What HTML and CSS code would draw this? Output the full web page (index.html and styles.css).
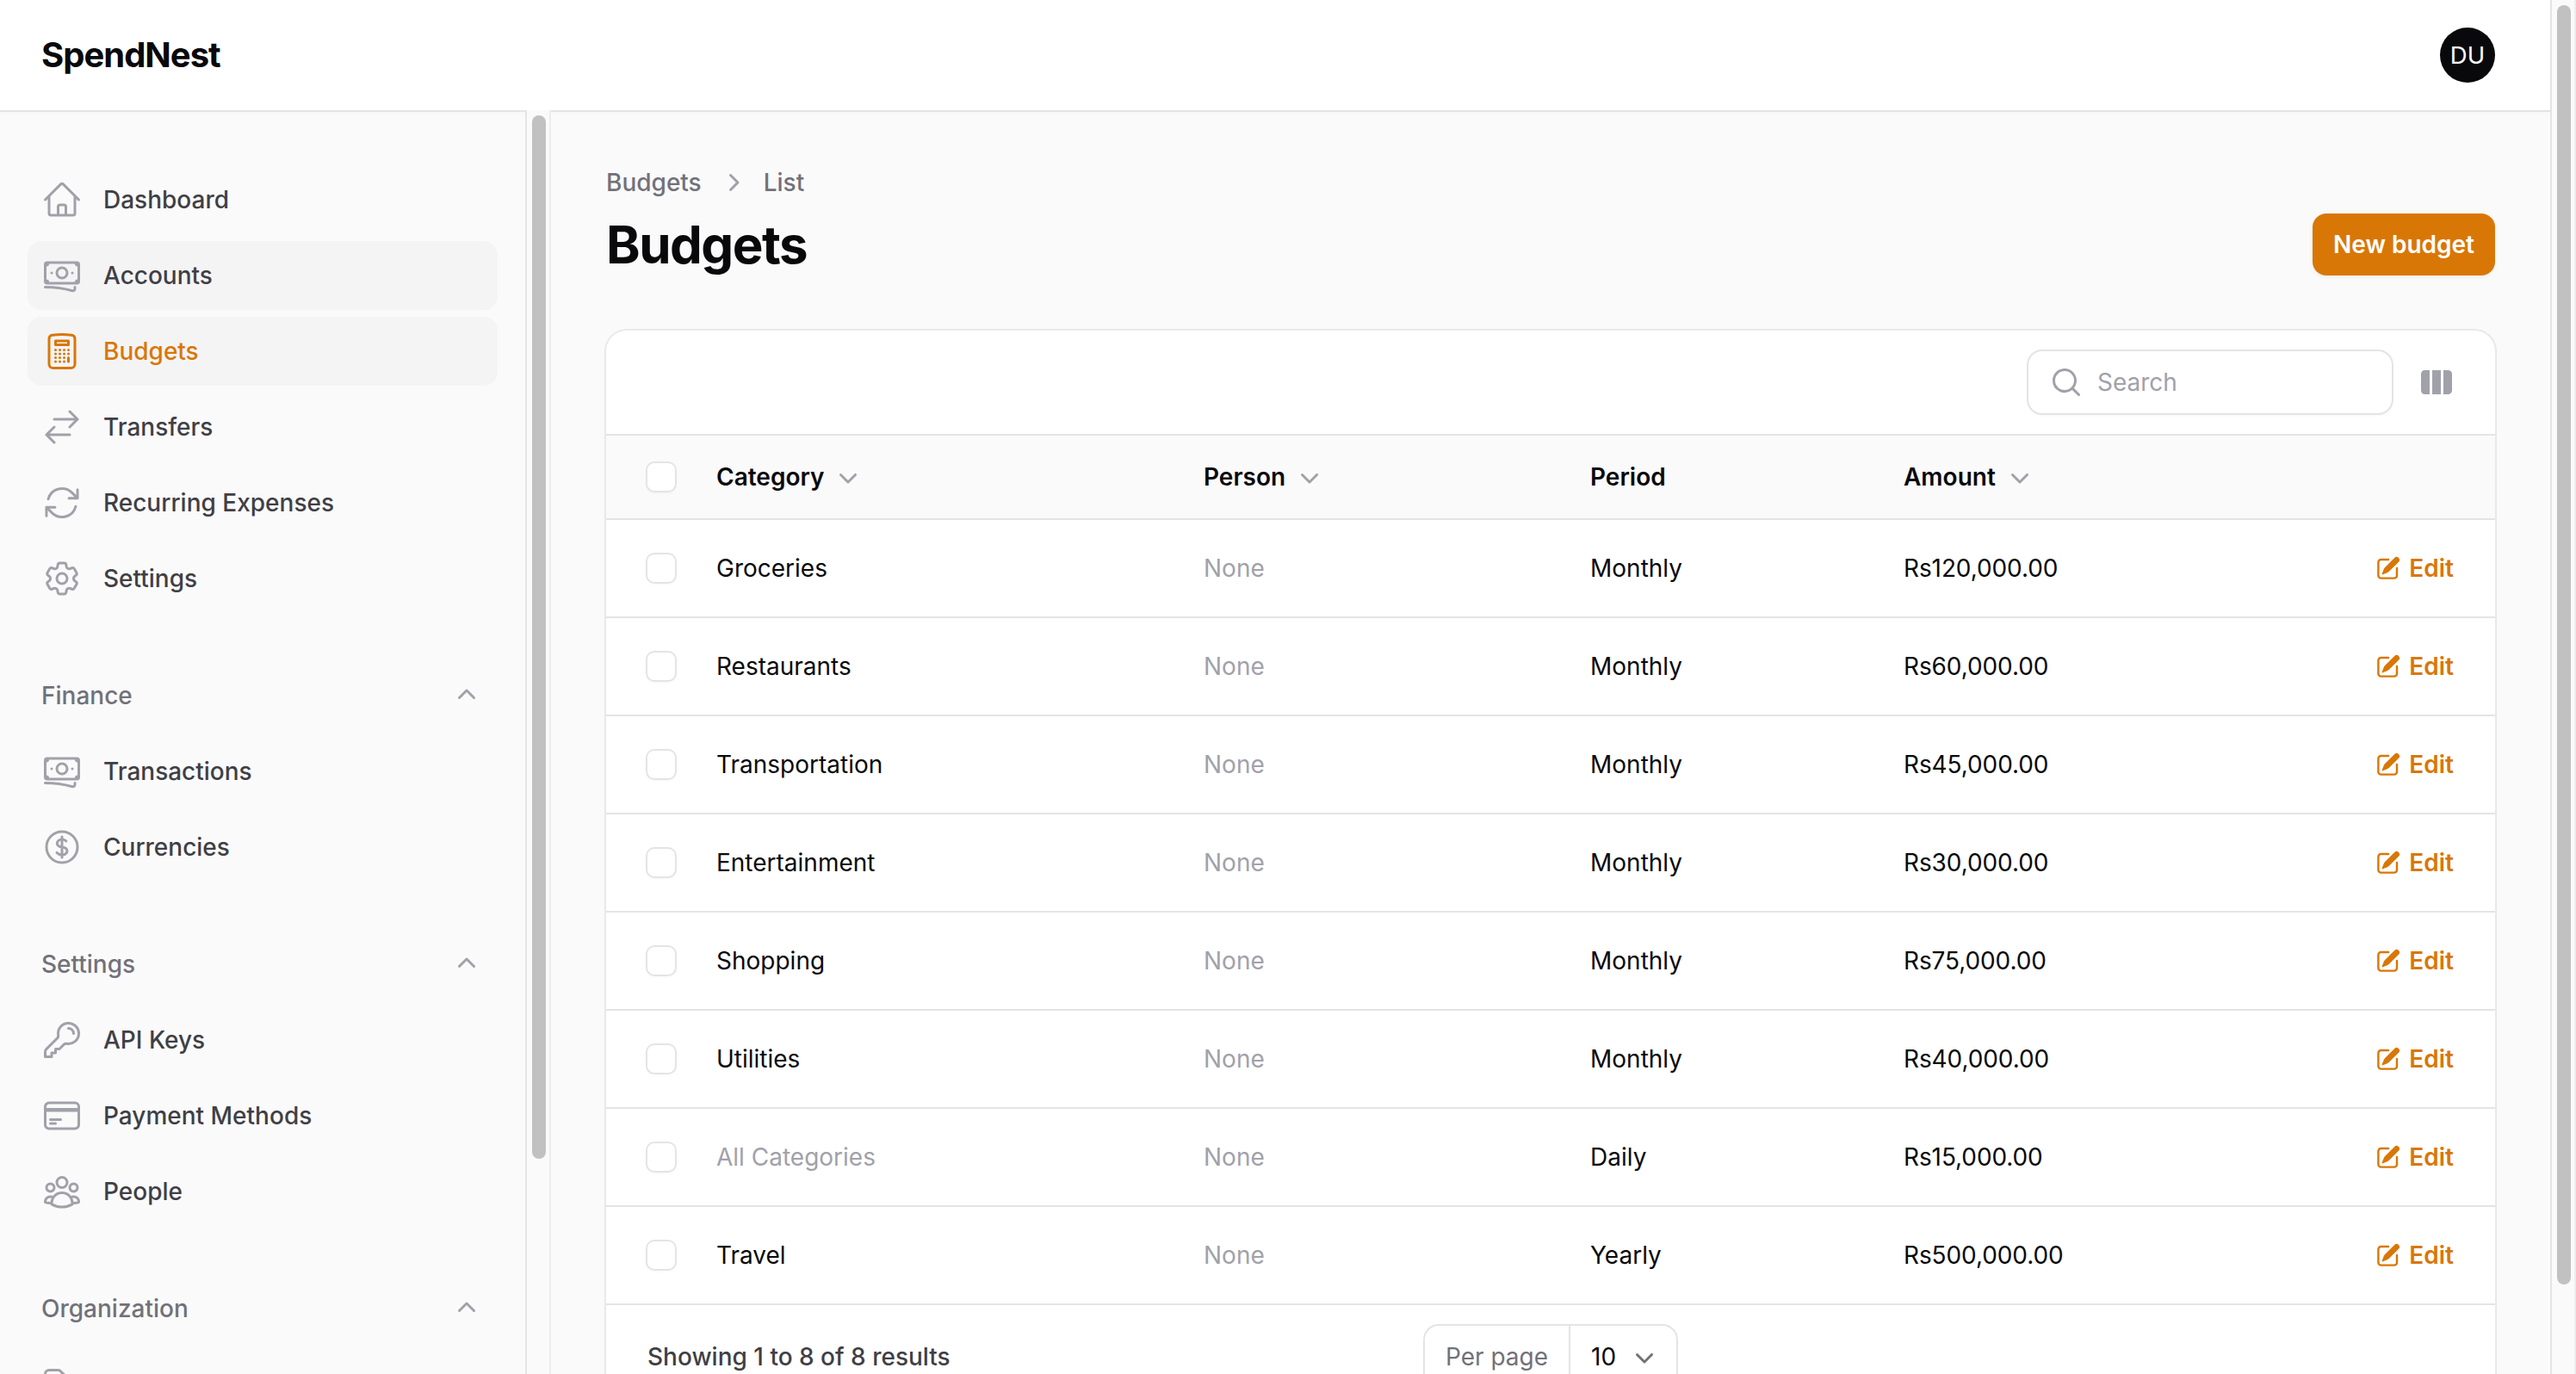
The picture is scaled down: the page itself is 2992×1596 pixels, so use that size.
FILE: index.html
```html
<!DOCTYPE html>
<html lang="en">
<head>
<meta charset="utf-8">
<title>Budgets - SpendNest</title>
<link rel="stylesheet" href="styles.css">
</head>
<body>
<svg class="sprite" xmlns="http://www.w3.org/2000/svg">
  <symbol id="home" viewBox="0 0 24 24"><path d="m2.25 12 8.954-8.955c.44-.439 1.152-.439 1.591 0L21.75 12M4.5 9.75v10.125c0 .621.504 1.125 1.125 1.125H9.75v-4.875c0-.621.504-1.125 1.125-1.125h2.25c.621 0 1.125.504 1.125 1.125V21h4.125c.621 0 1.125-.504 1.125-1.125V9.75M8.25 21h8.25"/></symbol>
  <symbol id="banknotes" viewBox="0 0 24 24"><path d="M2.25 18.75a60.07 60.07 0 0 1 15.797 2.101c.727.198 1.453-.342 1.453-1.096V18.75M3.75 4.5v.75A.75.75 0 0 1 3 6h-.75m0 0v-.375c0-.621.504-1.125 1.125-1.125H20.25M2.25 6v9m18-10.5v.75c0 .414.336.75.75.75h.75m-1.5-1.5h.375c.621 0 1.125.504 1.125 1.125v9.75c0 .621-.504 1.125-1.125 1.125h-.375m1.5-1.5H21a.75.75 0 0 0-.75.75v.75m0 0H3.75m0 0h-.375a1.125 1.125 0 0 1-1.125-1.125V15m1.5 1.5v-.75A.75.75 0 0 0 3 15h-.75M15 10.5a3 3 0 1 1-6 0 3 3 0 0 1 6 0Zm3 0h.008v.008H18V10.5Zm-12 0h.008v.008H6V10.5Z"/></symbol>
  <symbol id="calculator" viewBox="0 0 24 24"><path d="M15.75 15.75V18m-7.5-6.75h.008v.008H8.25v-.008Zm0 2.25h.008v.008H8.25V13.5Zm0 2.25h.008v.008H8.25v-.008Zm0 2.25h.008v.008H8.25V18Zm2.498-6.75h.007v.008h-.007v-.008Zm0 2.25h.007v.008h-.007V13.5Zm0 2.25h.007v.008h-.007v-.008Zm0 2.25h.007v.008h-.007V18Zm2.504-6.75h.008v.008h-.008v-.008Zm0 2.25h.008v.008h-.008V13.5Zm0 2.25h.008v.008h-.008v-.008Zm0 2.25h.008v.008h-.008V18Zm2.498-6.75h.008v.008h-.008v-.008Zm0 2.25h.008v.008h-.008V13.5ZM8.25 6h7.5v2.25h-7.5V6ZM12 2.25c-1.892 0-3.758.11-5.593.322C5.307 2.7 4.5 3.65 4.5 4.757V19.5a2.25 2.25 0 0 0 2.25 2.25h10.5a2.25 2.25 0 0 0 2.25-2.25V4.757c0-1.108-.806-2.057-1.907-2.185A48.507 48.507 0 0 0 12 2.25Z"/></symbol>
  <symbol id="transfer" viewBox="0 0 24 24"><path d="M7.5 21 3 16.5m0 0L7.5 12M3 16.5h13.5m0-13.5L21 7.5m0 0L16.5 12M21 7.5H7.5"/></symbol>
  <symbol id="refresh" viewBox="0 0 24 24"><path d="M16.023 9.348h4.992v-.001M2.985 19.644v-4.992m0 0h4.992m-4.993 0 3.181 3.183a8.25 8.25 0 0 0 13.803-3.7M4.031 9.865a8.25 8.25 0 0 1 13.803-3.7l3.181 3.182m0-4.991v4.99"/></symbol>
  <symbol id="cog" viewBox="0 0 24 24"><path d="M9.594 3.94c.09-.542.56-.94 1.11-.94h2.593c.55 0 1.02.398 1.11.94l.213 1.281c.063.374.313.686.645.87.074.04.147.083.22.127.325.196.72.257 1.075.124l1.217-.456a1.125 1.125 0 0 1 1.37.49l1.296 2.247a1.125 1.125 0 0 1-.26 1.431l-1.003.827c-.293.241-.438.613-.43.992a7.723 7.723 0 0 1 0 .255c-.008.378.137.75.43.991l1.004.827c.424.35.534.955.26 1.43l-1.298 2.247a1.125 1.125 0 0 1-1.369.491l-1.217-.456c-.355-.133-.75-.072-1.076.124a6.47 6.47 0 0 1-.22.128c-.331.183-.581.495-.644.869l-.213 1.281c-.09.543-.56.94-1.11.94h-2.594c-.55 0-1.019-.398-1.11-.94l-.213-1.281c-.062-.374-.312-.686-.644-.87a6.52 6.52 0 0 1-.22-.127c-.325-.196-.72-.257-1.076-.124l-1.217.456a1.125 1.125 0 0 1-1.369-.49l-1.297-2.247a1.125 1.125 0 0 1 .26-1.431l1.004-.827c.292-.24.437-.613.43-.991a6.932 6.932 0 0 1 0-.255c.007-.38-.138-.751-.43-.992l-1.004-.827a1.125 1.125 0 0 1-.26-1.43l1.297-2.247a1.125 1.125 0 0 1 1.37-.491l1.216.456c.356.133.751.072 1.076-.124.072-.044.146-.086.22-.128.332-.183.582-.495.644-.869l.214-1.28Z"/><path d="M15 12a3 3 0 1 1-6 0 3 3 0 0 1 6 0Z"/></symbol>
  <symbol id="dollar" viewBox="0 0 24 24"><path d="M12 6v12m-3-2.818.879.659c1.171.879 3.07.879 4.242 0 1.172-.879 1.172-2.303 0-3.182C13.536 12.219 12.768 12 12 12c-.725 0-1.45-.22-2.003-.659-1.106-.879-1.106-2.303 0-3.182s2.9-.879 4.006 0l.415.33M21 12a9 9 0 1 1-18 0 9 9 0 0 1 18 0Z"/></symbol>
  <symbol id="key" viewBox="0 0 24 24"><path d="M15.75 5.25a3 3 0 0 1 3 3m3 0a6 6 0 0 1-7.029 5.912c-.563-.097-1.159.026-1.563.43L10.5 17.25H8.25v2.25H6v2.25H2.25v-2.818c0-.597.237-1.17.659-1.591l6.499-6.499c.404-.404.527-1 .43-1.563A6 6 0 1 1 21.75 8.25Z"/></symbol>
  <symbol id="card" viewBox="0 0 24 24"><path d="M2.25 8.25h19.5M2.25 9h19.5m-16.5 5.25h6m-6 2.25h3m-3.75 3h15a2.25 2.25 0 0 0 2.25-2.25V6.75A2.25 2.25 0 0 0 19.5 4.5h-15a2.25 2.25 0 0 0-2.25 2.25v10.5A2.25 2.25 0 0 0 4.5 19.5Z"/></symbol>
  <symbol id="people" viewBox="0 0 24 24"><path d="M18 18.72a9.094 9.094 0 0 0 3.741-.479 3 3 0 0 0-4.682-2.72m.94 3.198.001.031c0 .225-.012.447-.037.666A11.944 11.944 0 0 1 12 21c-2.17 0-4.207-.576-5.963-1.584A6.062 6.062 0 0 1 6 18.719m12 0a5.971 5.971 0 0 0-.941-3.197m0 0A5.995 5.995 0 0 0 12 12.75a5.995 5.995 0 0 0-5.058 2.772m0 0a3 3 0 0 0-4.681 2.72 8.986 8.986 0 0 0 3.74.477m.94-3.197a5.971 5.971 0 0 0-.94 3.197M15 6.75a3 3 0 1 1-6 0 3 3 0 0 1 6 0Zm6 3a2.25 2.25 0 1 1-4.5 0 2.25 2.25 0 0 1 4.5 0Zm-13.5 0a2.25 2.25 0 1 1-4.5 0 2.25 2.25 0 0 1 4.5 0Z"/></symbol>
  <symbol id="folder" viewBox="0 0 24 24"><path d="M2.25 12.75V12A2.25 2.25 0 0 1 4.5 9.75h15A2.25 2.25 0 0 1 21.75 12v.75m-8.69-6.44-2.12-2.12a1.5 1.5 0 0 0-1.061-.44H4.5A2.25 2.25 0 0 0 2.25 6v12a2.25 2.25 0 0 0 2.25 2.25h15A2.25 2.25 0 0 0 21.75 18V9a2.25 2.25 0 0 0-2.25-2.25h-5.379a1.5 1.5 0 0 1-1.06-.44Z"/></symbol>
  <symbol id="up" viewBox="0 0 20 20"><path d="M9.47 6.47a.75.75 0 0 1 1.06 0l4.25 4.25a.75.75 0 1 1-1.06 1.06L10 8.06l-3.72 3.72a.75.75 0 0 1-1.06-1.06l4.25-4.25Z"/></symbol>
  <symbol id="down" viewBox="0 0 20 20"><path d="M5.22 8.22a.75.75 0 0 1 1.06 0L10 11.94l3.72-3.72a.75.75 0 1 1 1.06 1.06l-4.25 4.25a.75.75 0 0 1-1.06 0L5.22 9.28a.75.75 0 0 1 0-1.06Z"/></symbol>
  <symbol id="right" viewBox="0 0 20 20"><path d="M8.22 5.22a.75.75 0 0 1 1.06 0l4.25 4.25a.75.75 0 0 1 0 1.06l-4.25 4.25a.75.75 0 0 1-1.06-1.06L11.94 10 8.22 6.28a.75.75 0 0 1 0-1.06Z"/></symbol>
  <symbol id="search" viewBox="0 0 20 20"><path fill-rule="evenodd" d="M9 3.5a5.5 5.5 0 1 0 0 11 5.5 5.5 0 0 0 0-11ZM2 9a7 7 0 1 1 12.452 4.391l3.328 3.329a.75.75 0 1 1-1.06 1.06l-3.329-3.328A7 7 0 0 1 2 9Z"/></symbol>
  <symbol id="columns" viewBox="0 0 20 20"><path d="M14 17h2.75A2.25 2.25 0 0 0 19 14.75v-9.5A2.25 2.25 0 0 0 16.75 3H14v14ZM12.5 3h-5v14h5V3ZM3.25 3H6v14H3.25A2.25 2.25 0 0 1 1 14.75v-9.5A2.25 2.25 0 0 1 3.25 3Z"/></symbol>
  <symbol id="edit" viewBox="0 0 20 20"><path d="m5.433 13.917 1.262-3.155A4 4 0 0 1 7.58 9.42l6.92-6.918a2.121 2.121 0 0 1 3 3l-6.92 6.918c-.383.383-.84.685-1.343.886l-3.154 1.262a.5.5 0 0 1-.65-.65Z"/><path d="M3.5 5.75c0-.69.56-1.25 1.25-1.25H10A.75.75 0 0 0 10 3H4.75A2.75 2.75 0 0 0 2 5.75v9.5A2.75 2.75 0 0 0 4.75 18h9.5A2.75 2.75 0 0 0 17 15.25V10a.75.75 0 0 0-1.5 0v5.25c0 .69-.56 1.25-1.25 1.25h-9.5c-.69 0-1.25-.56-1.25-1.25v-9.5Z"/></symbol>
</svg>

<div class="window">
  <div class="page">
    <header class="topbar">
      <div class="logo">SpendNest</div>
      <div class="avatar">DU</div>
    </header>
    <div class="body">
      <aside class="sidebar">
        <nav class="nav">
          <ul class="group">
            <li class="item"><svg class="icon"><use href="#home"/></svg>Dashboard</li>
            <li class="item hovered"><svg class="icon"><use href="#banknotes"/></svg>Accounts</li>
            <li class="item active"><svg class="icon"><use href="#calculator"/></svg>Budgets</li>
            <li class="item"><svg class="icon"><use href="#transfer"/></svg>Transfers</li>
            <li class="item"><svg class="icon"><use href="#refresh"/></svg>Recurring Expenses</li>
            <li class="item"><svg class="icon"><use href="#cog"/></svg>Settings</li>
          </ul>
          <ul class="group">
            <li class="label">Finance<svg class="mini"><use href="#up"/></svg></li>
            <li class="item"><svg class="icon"><use href="#banknotes"/></svg>Transactions</li>
            <li class="item"><svg class="icon"><use href="#dollar"/></svg>Currencies</li>
          </ul>
          <ul class="group">
            <li class="label">Settings<svg class="mini"><use href="#up"/></svg></li>
            <li class="item"><svg class="icon"><use href="#key"/></svg>API Keys</li>
            <li class="item"><svg class="icon"><use href="#card"/></svg>Payment Methods</li>
            <li class="item"><svg class="icon"><use href="#people"/></svg>People</li>
          </ul>
          <ul class="group">
            <li class="label">Organization<svg class="mini"><use href="#up"/></svg></li>
            <li class="item"><svg class="icon"><use href="#folder"/></svg></li>
          </ul>
        </nav>
        <div class="scrollbar side-scroll"><div class="thumb"></div></div>
      </aside>

      <main class="main">
        <div class="crumbs"><span>Budgets</span><svg class="mini"><use href="#right"/></svg><span>List</span></div>
        <div class="heading">
          <h1 class="title">Budgets</h1>
          <button class="primary">New budget</button>
        </div>
        <section class="card">
          <div class="toolbar">
            <div class="search"><svg class="mini"><use href="#search"/></svg>Search</div>
            <svg class="mini"><use href="#columns"/></svg>
          </div>
          <div class="row head">
            <span class="check"></span>
            <span class="th">Category<svg class="mini"><use href="#down"/></svg></span>
            <span class="th">Person<svg class="mini"><use href="#down"/></svg></span>
            <span class="th">Period</span>
            <span class="th">Amount<svg class="mini"><use href="#down"/></svg></span>
          </div>
          <div class="row"><span class="check"></span><span>Groceries</span><span class="muted">None</span><span>Monthly</span><span class="amount">Rs120,000.00</span><a class="edit"><svg class="small"><use href="#edit"/></svg>Edit</a></div>
          <div class="row"><span class="check"></span><span>Restaurants</span><span class="muted">None</span><span>Monthly</span><span class="amount">Rs60,000.00</span><a class="edit"><svg class="small"><use href="#edit"/></svg>Edit</a></div>
          <div class="row"><span class="check"></span><span>Transportation</span><span class="muted">None</span><span>Monthly</span><span class="amount">Rs45,000.00</span><a class="edit"><svg class="small"><use href="#edit"/></svg>Edit</a></div>
          <div class="row"><span class="check"></span><span>Entertainment</span><span class="muted">None</span><span>Monthly</span><span class="amount">Rs30,000.00</span><a class="edit"><svg class="small"><use href="#edit"/></svg>Edit</a></div>
          <div class="row"><span class="check"></span><span>Shopping</span><span class="muted">None</span><span>Monthly</span><span class="amount">Rs75,000.00</span><a class="edit"><svg class="small"><use href="#edit"/></svg>Edit</a></div>
          <div class="row"><span class="check"></span><span>Utilities</span><span class="muted">None</span><span>Monthly</span><span class="amount">Rs40,000.00</span><a class="edit"><svg class="small"><use href="#edit"/></svg>Edit</a></div>
          <div class="row"><span class="check"></span><span class="muted">All Categories</span><span class="muted">None</span><span>Daily</span><span class="amount">Rs15,000.00</span><a class="edit"><svg class="small"><use href="#edit"/></svg>Edit</a></div>
          <div class="row"><span class="check"></span><span>Travel</span><span class="muted">None</span><span>Yearly</span><span class="amount">Rs500,000.00</span><a class="edit"><svg class="small"><use href="#edit"/></svg>Edit</a></div>
          <div class="pager">
            <span class="summary">Showing 1 to 8 of 8 results</span>
            <div class="select"><span class="prefix">Per page</span><span class="value">10<svg class="mini"><use href="#down"/></svg></span></div>
            <span></span>
          </div>
        </section>
      </main>
    </div>
  </div>
  <div class="scrollbar page-scroll"><div class="thumb"></div></div>
</div>
</body>
</html>
```

FILE: styles.css
```css
* { box-sizing: border-box; }

body {
  margin: 0;
  background: #fafafa;
  color: #09090b;
  font: 400 28px/40px Inter, "Liberation Sans", sans-serif;
  -webkit-font-smoothing: antialiased;
}

ul { list-style: none; margin: 0; padding: 0; }
svg { display: block; flex: none; }

.sprite { display: none; }

.window { display: flex; height: 1596px; overflow: hidden; }
.page { flex: 1; display: flex; flex-direction: column; min-width: 0; }

.icon {
  width: 48px;
  height: 48px;
  fill: none;
  stroke: #a1a1aa;
  stroke-width: 1.5;
  stroke-linecap: round;
  stroke-linejoin: round;
}
.mini { width: 40px; height: 40px; fill: #a1a1aa; }
.small { width: 32px; height: 32px; fill: currentColor; }

/* Top bar */
.topbar {
  flex: none;
  display: flex;
  align-items: center;
  justify-content: space-between;
  height: 128px;
  padding: 0 64px 0 48px;
  background: #fff;
  box-shadow: 0 2px 0 #e4e4e5, 0 3px 3px rgba(0, 0, 0, .02);
}
.logo { font-size: 40px; font-weight: 700; letter-spacing: -.025em; }
.avatar {
  width: 64px;
  height: 64px;
  border-radius: 50%;
  background: #09090b;
  color: #fff;
  font-size: 27.5px;
  line-height: 64px;
  text-align: center;
}

.body { flex: 1; display: flex; min-height: 0; }

/* Sidebar */
.sidebar { width: 640px; flex: none; display: flex; overflow: hidden; }
.nav {
  width: 610px;
  padding: 64px 32px;
  display: flex;
  flex-direction: column;
  gap: 56px;
}
.group { display: flex; flex-direction: column; gap: 8px; }
.item, .label {
  flex: none;
  display: flex;
  align-items: center;
  height: 80px;
  padding: 0 16px;
  border-radius: 16px;
  font-weight: 500;
  color: #3f3f46;
}
.item { gap: 24px; }
.label { justify-content: space-between; color: #71717a; }
.hovered, .active { background: #f4f4f5; }
.active { color: #d97706; }
.active .icon { stroke: #d97706; }

/* Scrollbars */
.scrollbar {
  width: 30px;
  flex: none;
  background: #fafafa;
  border-left: 2px solid #e4e4e4;
  border-right: 2px solid #ededed;
  padding: 6px 4px 0 6px;
}
.thumb { width: 16px; border-radius: 8px; background: #c1c1c1; }
.side-scroll { position: relative; }
.side-scroll .thumb { height: 1212px; }
.page-scroll .thumb { height: 1486px; }

/* Content */
.main { flex: 1; min-width: 0; padding: 64px; }
.crumbs {
  display: flex;
  align-items: center;
  gap: 16px;
  margin-bottom: 16px;
  font-weight: 500;
  color: #71717a;
}
.heading {
  display: flex;
  align-items: center;
  justify-content: space-between;
  margin-bottom: 64px;
}
.title {
  margin: 0;
  font-size: 60px;
  line-height: 72px;
  font-weight: 700;
  letter-spacing: -.025em;
}
.primary {
  height: 72px;
  padding: 0 24px;
  border: 0;
  border-radius: 16px;
  background: #d97706;
  color: #fff;
  font: inherit;
  font-weight: 600;
  box-shadow: 0 2px 4px rgba(0, 0, 0, .05);
}

.card {
  border-radius: 24px;
  background: #fff;
  box-shadow: 0 0 0 2px #e9e9ea, 0 4px 4px rgba(0, 0, 0, .05);
}
.toolbar {
  display: flex;
  align-items: center;
  justify-content: flex-end;
  gap: 32px;
  height: 120px;
  padding: 0 48px;
}
.search {
  display: flex;
  align-items: center;
  gap: 16px;
  width: 422px;
  height: 72px;
  padding: 0 24px;
  border-radius: 16px;
  color: #a1a1aa;
  box-shadow: 0 0 0 2px #e4e4e5, 0 2px 4px rgba(0, 0, 0, .05);
}
.row {
  display: grid;
  grid-template-columns: 80px 566px 449px 364px 1fr auto;
  align-items: center;
  height: 114px;
  padding: 0 48px;
  border-top: 2px solid #e4e4e7;
}
.head { height: 98px; background: #fafafa; }
.th { display: flex; align-items: center; gap: 8px; font-weight: 600; }
.check {
  width: 32px;
  height: 32px;
  border-radius: 8px;
  background: #fff;
  box-shadow: 0 0 0 2px #e4e4e5, 0 2px 4px rgba(0, 0, 0, .05);
}
.muted { color: #a1a1aa; }
.amount { letter-spacing: -.1px; }
.edit {
  display: flex;
  align-items: center;
  gap: 8px;
  font-weight: 600;
  color: #d97706;
}

/* Pagination */
.pager {
  display: grid;
  grid-template-columns: 1fr auto 1fr;
  align-items: center;
  padding: 24px 48px;
  border-top: 2px solid #e4e4e7;
}
.summary { font-weight: 500; color: #3f3f46; }
.select {
  display: flex;
  height: 72px;
  line-height: 72px;
  border-radius: 16px;
  box-shadow: 0 0 0 2px #e4e4e5, 0 2px 4px rgba(0, 0, 0, .05);
}
.prefix { padding: 0 24px; border-right: 2px solid #e4e4e5; color: #71717a; }
.value { display: flex; align-items: center; gap: 13px; padding: 0 17px 0 24px; }
.value .mini { fill: #71717a; }
```
